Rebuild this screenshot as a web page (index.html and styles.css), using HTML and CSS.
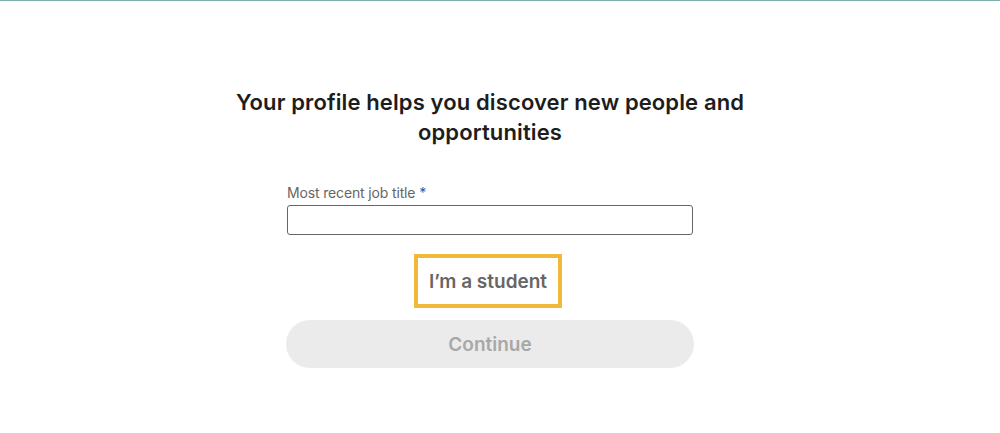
FILE: index.html
```html
<!DOCTYPE html>
<html>
<head>
<meta charset="utf-8">
<link rel="stylesheet" href="styles.css">
</head>
<body>
<div class="topline"></div>
<main class="page">
  <h1 class="title">Your profile helps you discover new people and opportunities</h1>
  <form class="form">
    <label class="label" for="job">Most recent job title <span class="req">*</span></label>
    <input class="input" id="job" type="text">
    <div class="student-wrap">
      <button type="button" class="student">I’m a student</button>
    </div>
    <button type="button" class="continue">Continue</button>
  </form>
</main>
</body>
</html>
```
FILE: styles.css
```css
html, body {
  margin: 0;
  padding: 0;
  background: #ffffff;
  font-family: Inter, "Liberation Sans", Arial, sans-serif;
}
.topline {
  height: 1px;
  background: #7fb0b0;
}
.page {
  display: flex;
  flex-direction: column;
  align-items: center;
  padding-top: 86px;
  padding-right: 20px;
}
.title {
  margin: 0;
  width: 540px;
  text-align: center;
  font-size: 22px;
  line-height: 30px;
  font-weight: 600;
  color: #1d1d1d;
  letter-spacing: 0.12px;
}
.form {
  width: 408px;
  display: flex;
  flex-direction: column;
  margin-top: 36px;
}
.label {
  font-size: 14px;
  line-height: 20px;
  color: #666666;
  padding-left: 1px;
  letter-spacing: -0.15px;
}
.req {
  color: #0a66c2;
}
.input {
  margin: 2px 1px 0 1px;
  height: 30px;
  box-sizing: border-box;
  border: 1px solid #666666;
  border-radius: 3px;
  background: #fff;
}
.student-wrap {
  display: flex;
  justify-content: center;
  margin-top: 19px;
  padding-right: 4px;
}
.student {
  font-family: inherit;
  font-size: 19px;
  font-weight: 600;
  color: #666666;
  background: #fff;
  border: 4px solid #f0b93a;
  padding: 0;
  height: 54px;
  width: 148px;
  box-sizing: border-box;
}
.continue {
  margin-top: 12px;
  height: 48px;
  border: none;
  border-radius: 24px;
  background: #ebebeb;
  color: #a8a8a8;
  font-family: inherit;
  font-size: 19px;
  font-weight: 600;
}
```
